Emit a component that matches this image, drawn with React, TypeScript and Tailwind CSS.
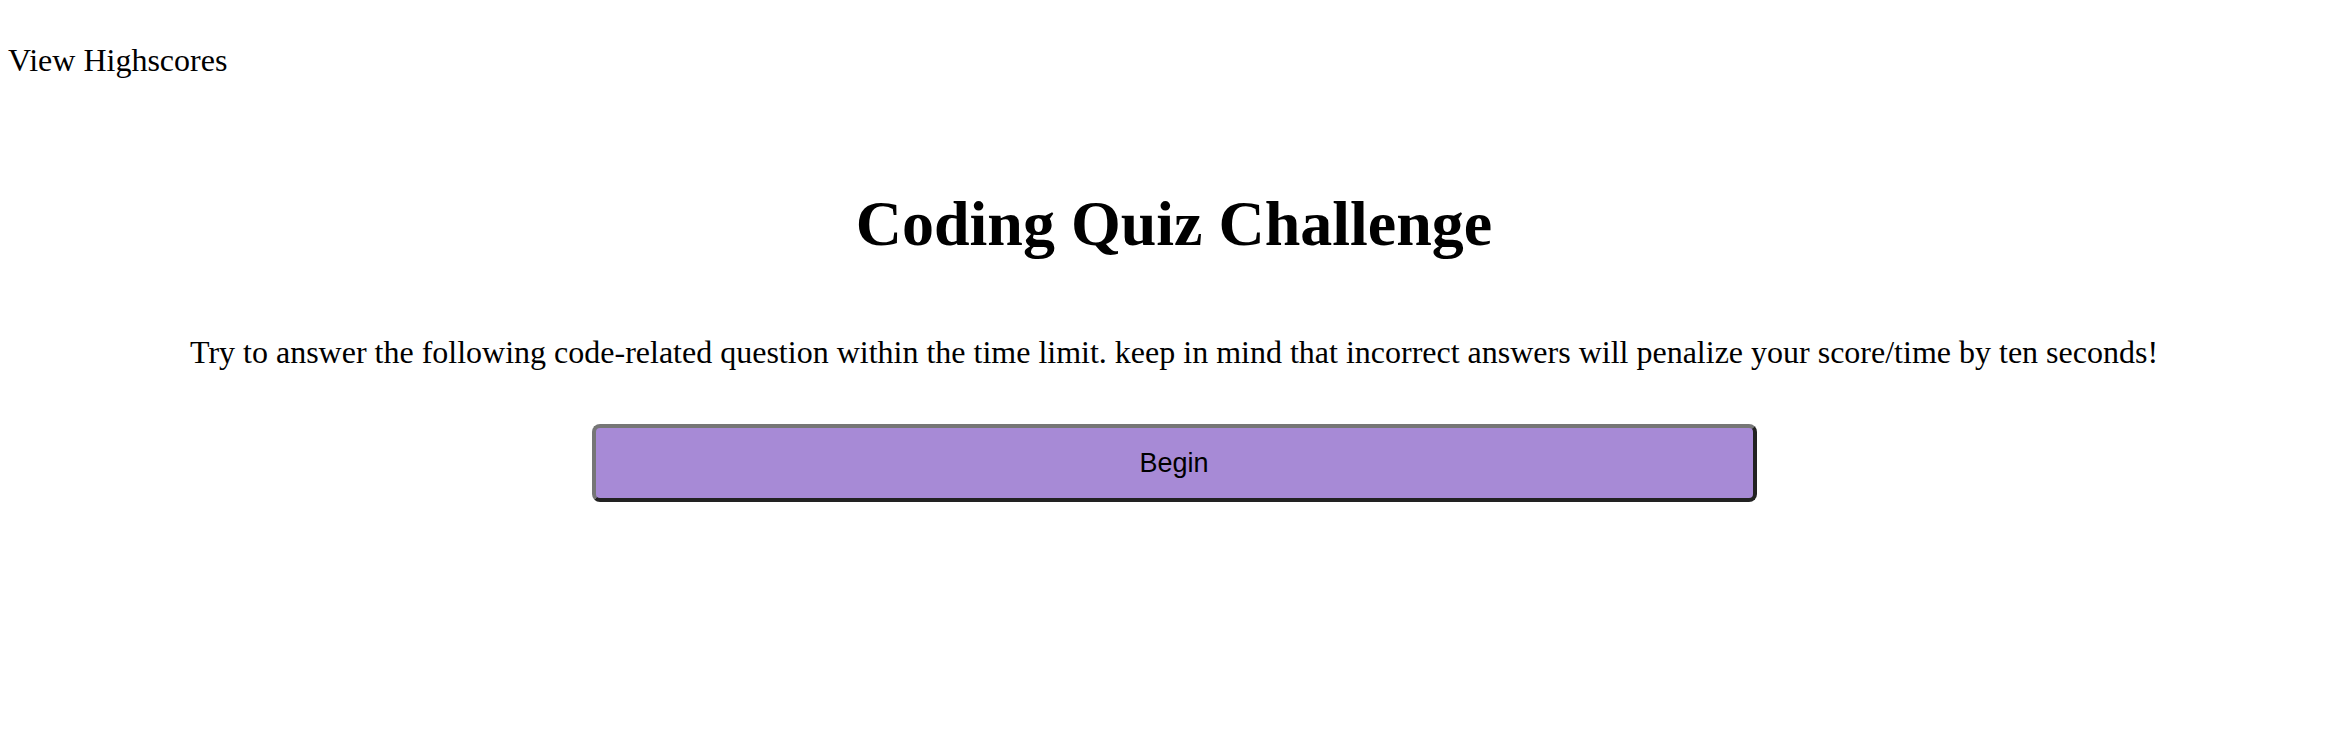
export default function App() {
  return (
    <div className="min-h-[732px] w-full bg-white text-black" style={{ fontFamily: '"Liberation Serif", "Times New Roman", serif' }}>
      <header className="pt-[42px] pl-[8px]">
        <a className="text-[32px] leading-[36px] text-black">View Highscores</a>
      </header>
      <main className="pl-[14px] flex flex-col items-center">
        <h1 className="mt-[110px] text-[64px] leading-[72px] font-bold text-center">Coding Quiz Challenge</h1>
        <p className="mt-[74px] text-[32px] leading-[36px] text-center">
          Try to answer the following code-related question within the time limit. keep in mind that incorrect answers will penalize your score/time by ten seconds!
        </p>
        <button
          className="mt-[54px] w-[1165px] h-[78px] rounded-[8px] border-[4px] border-t-[#767676] border-l-[#767676] border-b-[#222222] border-r-[#222222] bg-[#a78ad6] text-black text-[27px] flex items-center justify-center"
          style={{ fontFamily: '"Liberation Sans", Arial, sans-serif' }}
        >
          Begin
        </button>
      </main>
    </div>
  );
}
